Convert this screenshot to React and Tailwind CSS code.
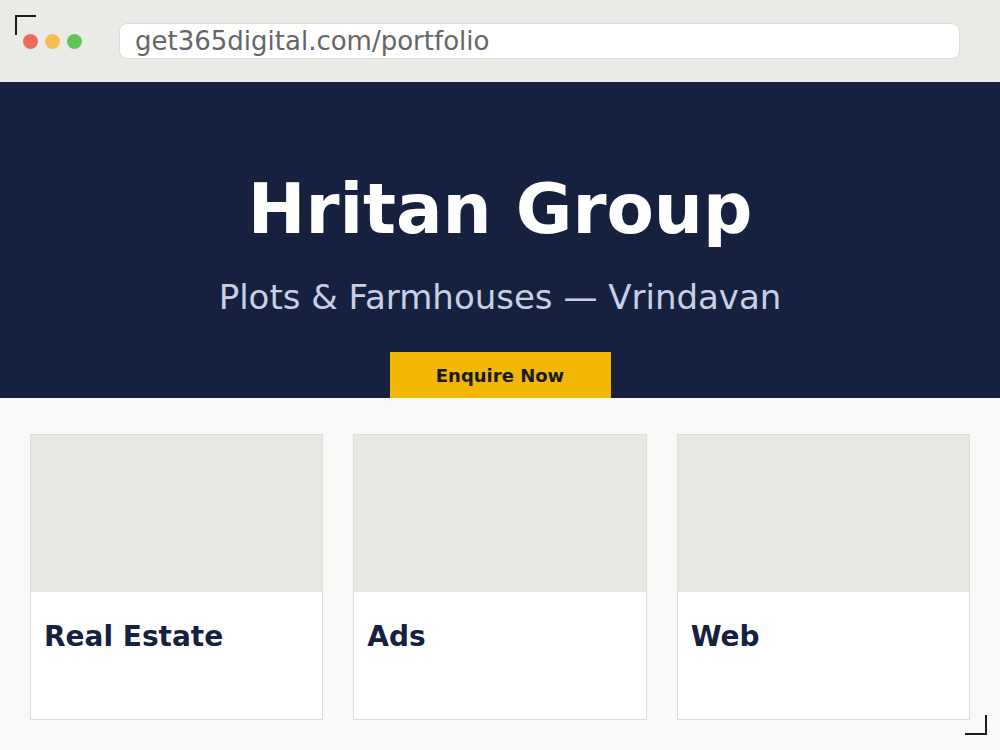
import React from "react";

const font = { fontFamily: '"DejaVu Sans", "Liberation Sans", sans-serif' };

function Card({ title }) {
  return (
    <div className="flex h-[286px] flex-col border border-[#dddddb] bg-white">
      <div className="h-[157px] bg-[#e8e8e4]" />
      <div className="px-[13px] pt-[31px]">
        <h3 className="text-[28px] font-bold leading-none text-[#16213f]">{title}</h3>
      </div>
    </div>
  );
}

export default function App() {
  return (
    <div className="relative h-[750px] w-[1000px] overflow-hidden bg-[#f9f9f7]" style={font}>
      {/* frame corner marks */}
      <div className="absolute left-[15px] top-[15px] z-10 h-[20px] w-[21px] border-l-2 border-t-2 border-[#1a1a1a]" />
      <div className="absolute left-[965px] top-[715px] z-10 h-[20px] w-[22px] border-b-2 border-r-2 border-[#1a1a1a]" />

      {/* browser chrome */}
      <div className="flex h-[82px] items-center bg-[#eaeae7] pl-[23px] pr-[40px]">
        <div className="flex gap-[7px]">
          <span className="h-[15px] w-[15px] rounded-full bg-[#ec6a5e]" />
          <span className="h-[15px] w-[15px] rounded-full bg-[#f4bf4f]" />
          <span className="h-[15px] w-[15px] rounded-full bg-[#61c554]" />
        </div>
        <div className="ml-[37px] flex h-[36px] flex-1 items-center rounded-[8px] border border-[#dcdcd8] bg-white pl-[15px]">
          <span className="text-[26px] leading-none text-[#666666]">get365digital.com/portfolio</span>
        </div>
      </div>

      {/* hero */}
      <div className="flex h-[316px] flex-col items-center bg-[#16213f] pt-[93px]">
        <h1 className="text-[69px] font-bold leading-none text-white">Hritan Group</h1>
        <p className="mt-[36px] text-[34px] leading-none text-[#c6d0e6]">Plots &amp; Farmhouses — Vrindavan</p>
        <button className="relative mt-[38px] flex h-[47px] w-[221px] items-center justify-center bg-[#f2b705] text-[18px] font-bold text-[#1a1a1a]">
          Enquire Now
        </button>
      </div>

      {/* services */}
      <div className="grid grid-cols-3 gap-[30px] px-[30px] pt-[36px]">
        <Card title="Real Estate" />
        <Card title="Ads" />
        <Card title="Web" />
      </div>
    </div>
  );
}
